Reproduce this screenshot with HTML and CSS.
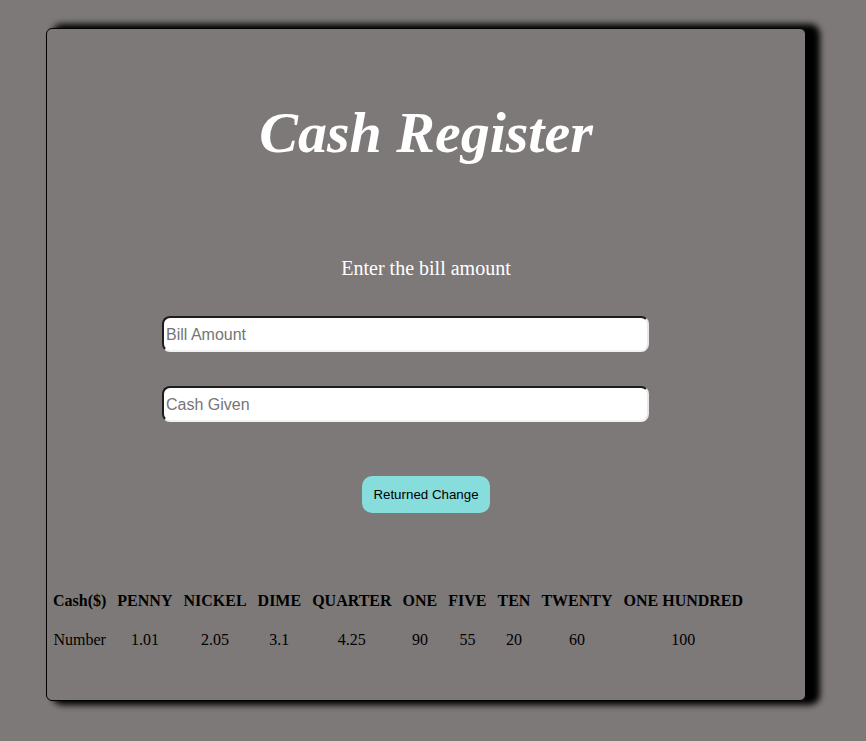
FILE: index.html
```html
<!DOCTYPE html>
<html lang="en">
<head>
<meta charset="utf-8">
<title>Cash Register</title>
<link rel="stylesheet" href="styles.css">
</head>
<body>
<main class="card">
  <h1 class="title">Cash Register</h1>
  <p class="prompt">Enter the bill amount</p>
  <input class="field field-first" type="number" placeholder="Bill Amount">
  <input class="field field-second" type="number" placeholder="Cash Given">
  <button class="btn" type="button">Returned Change</button>
  <table class="notes">
    <tr>
      <th>Cash($)</th><th>PENNY</th><th>NICKEL</th><th>DIME</th><th>QUARTER</th><th>ONE</th><th>FIVE</th><th>TEN</th><th>TWENTY</th><th>ONE HUNDRED</th>
    </tr>
    <tr>
      <td>Number</td><td>1.01</td><td>2.05</td><td>3.1</td><td>4.25</td><td>90</td><td>55</td><td>20</td><td>60</td><td>100</td>
    </tr>
  </table>
</main>
</body>
</html>
```
FILE: styles.css
```css
html, body {
  margin: 0;
  padding: 0;
  background: #7d7978;
  font-family: "Liberation Serif", "Times New Roman", serif;
}

body {
  padding: 28px 0 41px 46px;
}

.card {
  box-sizing: border-box;
  width: 760px;
  height: 673px;
  border: 1px solid #000;
  border-radius: 6px;
  box-shadow: 10px 0 6px 4px #000;
  background: #7d7978;
  display: flex;
  flex-direction: column;
  align-items: center;
}

.title {
  margin: 72px 0 0;
  font-size: 58px;
  line-height: 64px;
  font-weight: bold;
  font-style: italic;
  color: #fff;
}

.prompt {
  margin: 92px 0 0;
  font-size: 20px;
  line-height: 22px;
  color: #fff;
}

.field {
  box-sizing: border-box;
  align-self: flex-start;
  margin-left: 115px;
  width: 487px;
  height: 36px;
  padding: 1px 2px 0;
  border-width: 2px;
  border-style: solid;
  border-color: #1c1c1c #e8e8e8 #f2f2f2 #1c1c1c;
  border-radius: 8px;
  background: #fff;
  font-family: "Liberation Sans", Arial, sans-serif;
  font-size: 16px;
  color: #000;
  outline: none;
}

.field::placeholder {
  color: #757575;
}

.field-first {
  margin-top: 37px;
}

.field-second {
  margin-top: 34px;
}

.btn {
  margin-top: 54px;
  height: 37px;
  padding: 0 11.5px;
  border: none;
  border-radius: 10px;
  background: #87dcdc;
  color: #000;
  font-family: "Liberation Sans", Arial, sans-serif;
  font-size: 13.333px;
}

.notes {
  align-self: flex-start;
  margin-top: 69px;
  border-collapse: separate;
  border-spacing: 0;
  color: #000;
  font-size: 16px;
}

.notes th,
.notes td {
  padding: 10px 5.5px;
  line-height: 18px;
  text-align: center;
}

.notes th:first-child,
.notes td:first-child {
  padding-left: 6px;
}

.notes th {
  font-weight: bold;
}

.notes td {
  padding-top: 11px;
}
```
